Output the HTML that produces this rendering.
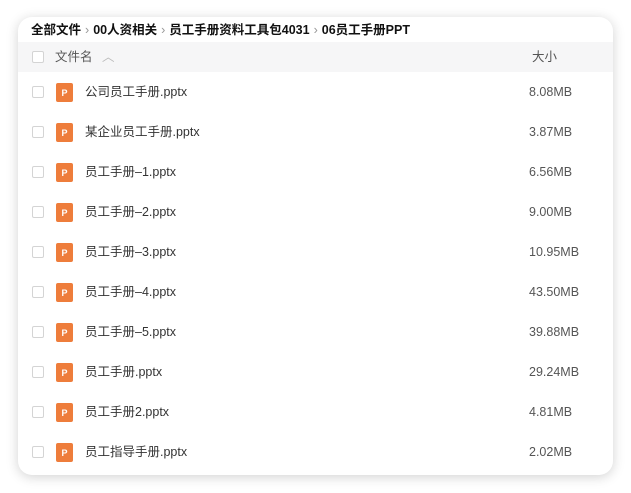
<!DOCTYPE html>
<html><head><meta charset="utf-8"><style>
*{margin:0;padding:0;box-sizing:border-box}
body{width:631px;height:493px;background:#fff;font-family:"Liberation Sans","Noto Sans CJK SC",sans-serif;position:relative;overflow:hidden}
.card{position:absolute;left:18px;top:17px;width:595px;height:458px;background:#fff;border-radius:14px;box-shadow:0 2px 12px rgba(0,0,0,.18);overflow:hidden}
.bc{position:absolute;left:13px;top:3px;font-size:12.5px;line-height:20px;font-weight:bold;color:#111;white-space:nowrap}
.bc span.s{color:#999;font-weight:normal;margin:0 4px}
.hd{position:absolute;left:0;top:25px;width:100%;height:30px;background:#f6f6f7}
.cb{position:absolute;left:14px;width:12px;height:12px;border:1px solid #d4d4d4;border-radius:2px;background:#fff}
.t{position:absolute;font-size:12.5px;line-height:20px;color:#333;white-space:nowrap}
.sz{position:absolute;left:511px;font-size:12.5px;line-height:20px;color:#555}
.ic{position:absolute;left:38px;width:17px;height:19px;background:#ee7d3b;border-radius:2px;color:#fff;font-size:9px;font-weight:bold;text-align:center;line-height:20px}
.r{position:absolute;left:0;width:100%;height:40px}
.r .cb{top:10px}.r .ic{top:7px}.r .t{left:67px;top:6px}.r .sz{top:6px}
</style></head><body>
<div class="card">
<div class="bc">全部文件<span class="s">›</span>00人资相关<span class="s">›</span>员工手册资料工具包4031<span class="s">›</span>06员工手册PPT</div>
<div class="hd">
<div class="cb" style="top:9px"></div>
<div class="t" style="left:37px;top:5px;color:#555">文件名 <span style="color:#bbb;margin-left:6px">︿</span></div>
<div class="t" style="left:514px;top:5px;color:#555">大小</div>
</div>
<div class="r" style="top:59px"><div class="cb"></div><div class="ic">P</div><div class="t">公司员工手册.pptx</div><div class="sz">8.08MB</div></div>
<div class="r" style="top:99px"><div class="cb"></div><div class="ic">P</div><div class="t">某企业员工手册.pptx</div><div class="sz">3.87MB</div></div>
<div class="r" style="top:139px"><div class="cb"></div><div class="ic">P</div><div class="t">员工手册–1.pptx</div><div class="sz">6.56MB</div></div>
<div class="r" style="top:179px"><div class="cb"></div><div class="ic">P</div><div class="t">员工手册–2.pptx</div><div class="sz">9.00MB</div></div>
<div class="r" style="top:219px"><div class="cb"></div><div class="ic">P</div><div class="t">员工手册–3.pptx</div><div class="sz">10.95MB</div></div>
<div class="r" style="top:259px"><div class="cb"></div><div class="ic">P</div><div class="t">员工手册–4.pptx</div><div class="sz">43.50MB</div></div>
<div class="r" style="top:299px"><div class="cb"></div><div class="ic">P</div><div class="t">员工手册–5.pptx</div><div class="sz">39.88MB</div></div>
<div class="r" style="top:339px"><div class="cb"></div><div class="ic">P</div><div class="t">员工手册.pptx</div><div class="sz">29.24MB</div></div>
<div class="r" style="top:379px"><div class="cb"></div><div class="ic">P</div><div class="t">员工手册2.pptx</div><div class="sz">4.81MB</div></div>
<div class="r" style="top:419px"><div class="cb"></div><div class="ic">P</div><div class="t">员工指导手册.pptx</div><div class="sz">2.02MB</div></div>
</div>
</body></html>
